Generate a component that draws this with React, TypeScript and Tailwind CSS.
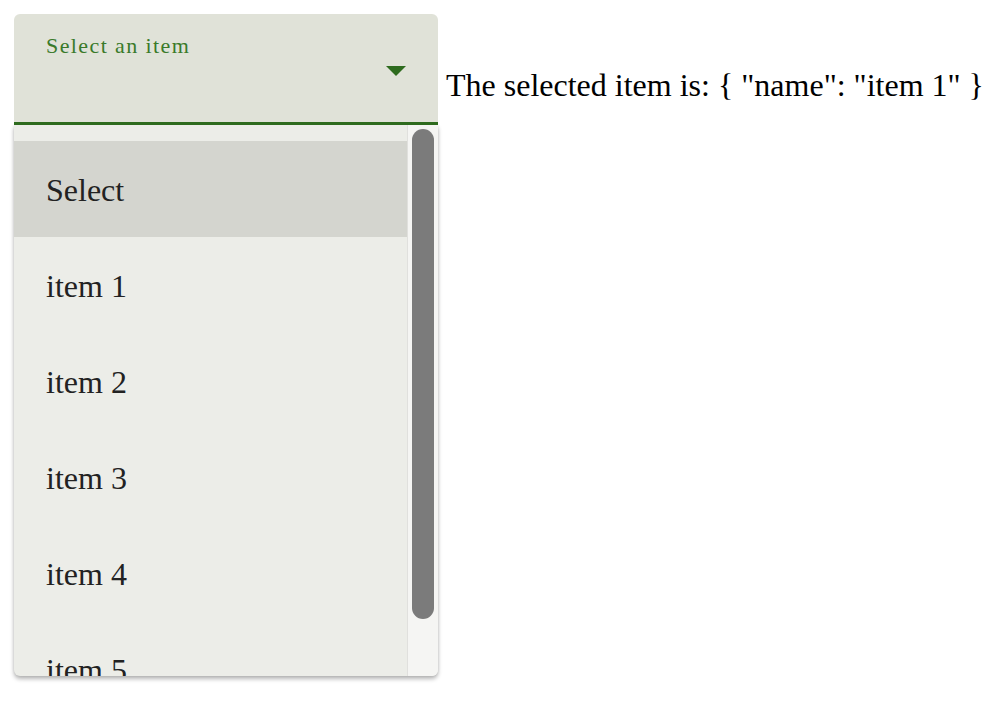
import { useState } from 'react';

const items = ['Select', 'item 1', 'item 2', 'item 3', 'item 4', 'item 5'];

export default function App() {
  const [selected] = useState({ name: 'item 1' });
  const [hovered] = useState(0);

  return (
    <div
      className="flex items-start pl-[14px] pt-[14px] bg-white min-h-[710px]"
      style={{ fontFamily: '"Liberation Serif", "Times New Roman", serif' }}
    >
      {/* select field + open menu */}
      <div className="relative w-[424px]">
        <div className="relative h-[111px] bg-[#e0e2d8] rounded-t-[6px] border-b-[3px] border-[#2e6b1e]">
          <div className="absolute left-[32px] top-[21px] text-[22px] leading-none tracking-[1.4px] text-[#3a7a2a]">
            Select an item
          </div>
          <svg
            className="absolute left-[372px] top-[52px]"
            width="20"
            height="10"
            viewBox="0 0 20 10"
          >
            <polygon points="0,0 20,0 10,10" fill="#2e6b1e" />
          </svg>
        </div>

        <div className="h-[551px] flex bg-[#ecede8] rounded-b-[6px] overflow-hidden shadow-[0_3px_4px_rgba(0,0,0,0.28),0_0_3px_rgba(0,0,0,0.1)]">
          <ul className="flex-1 pt-[16px] overflow-hidden">
            {items.map((it, i) => (
              <li
                key={it}
                className={`h-[96px] flex items-center pl-[32px] pt-[2px] text-[32px] leading-none text-[#222] ${
                  i === hovered ? 'bg-[#d4d5cf]' : ''
                }`}
              >
                {it}
              </li>
            ))}
          </ul>
          <div className="w-[31px] shrink-0 bg-[#f5f5f3] border-l border-[#e0e0dd] pt-[4px] pl-[4px]">
            <div className="w-[22px] h-[490px] rounded-full bg-[#7b7b7b]" />
          </div>
        </div>
      </div>

      <div className="ml-[8px] mt-[55px] text-[32px] leading-none text-black whitespace-nowrap">
        The selected item is: {JSON.stringify(selected).replace('{', '{ ').replace('}', ' }').replace(':', ': ')}
      </div>
    </div>
  );
}
